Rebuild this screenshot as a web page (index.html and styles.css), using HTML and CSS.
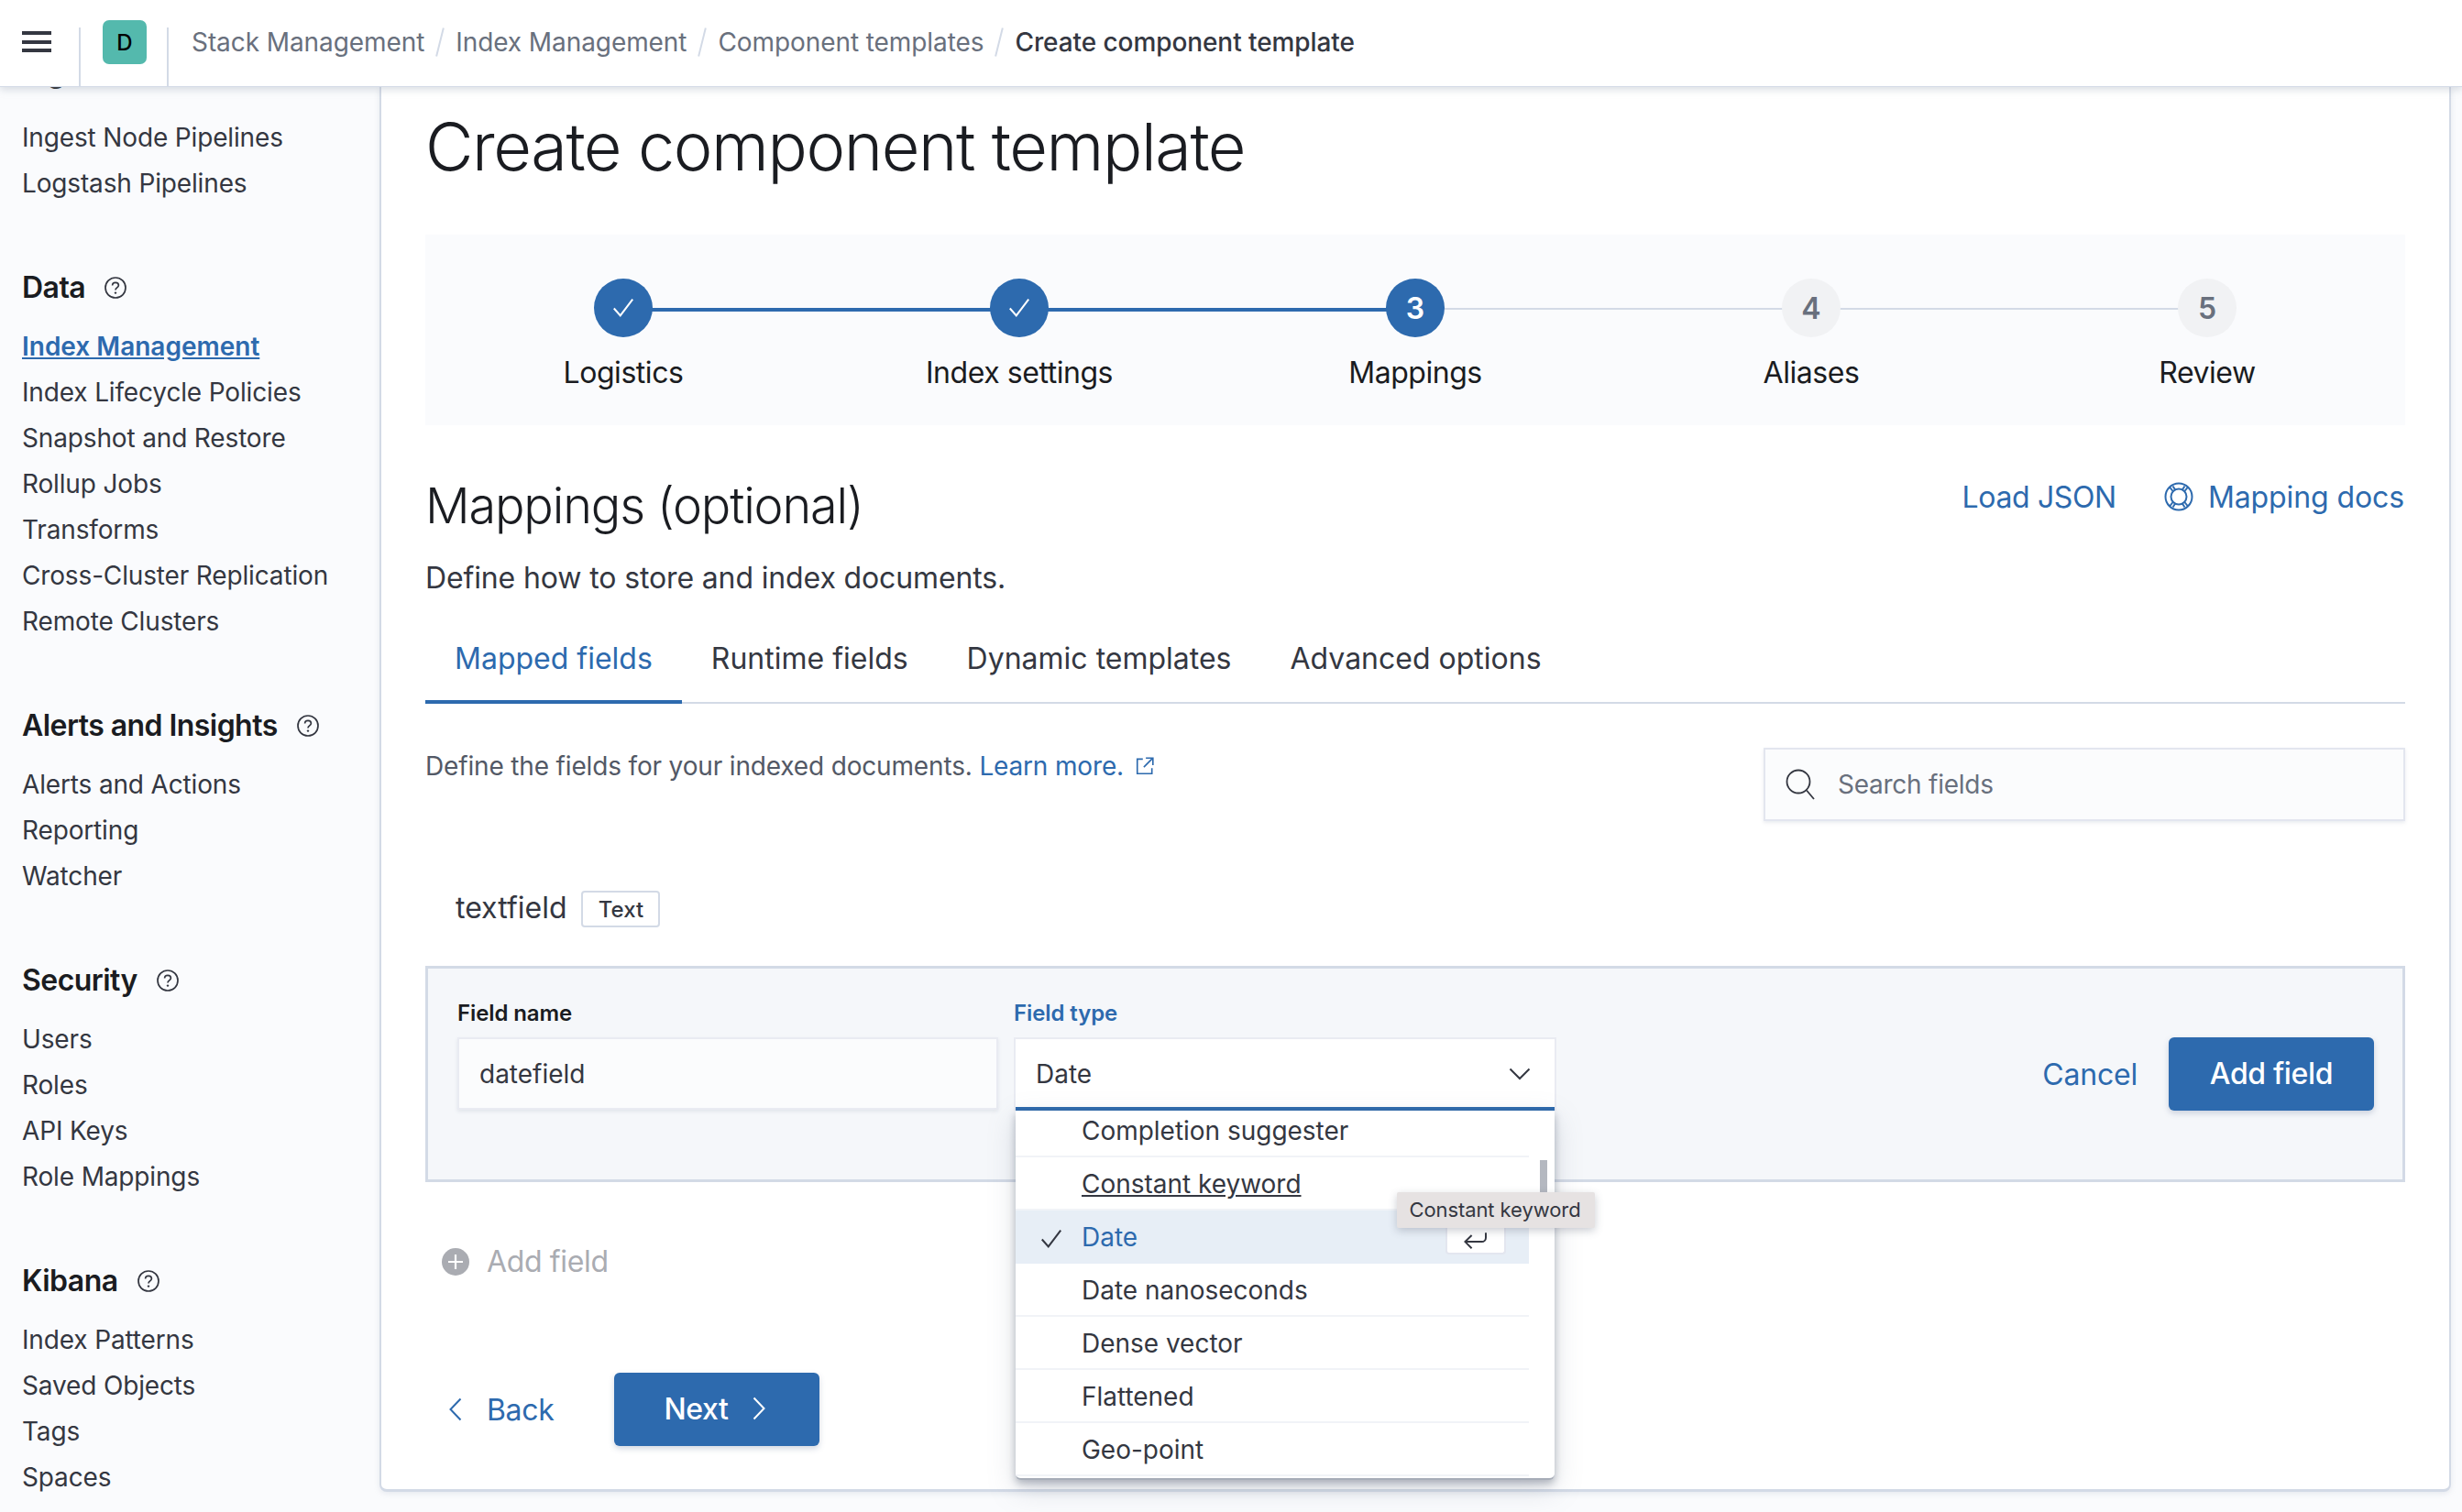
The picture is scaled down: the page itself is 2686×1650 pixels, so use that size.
FILE: index.html
```html
<!DOCTYPE html>
<html lang="en">
<head>
<meta charset="utf-8">
<title>Create component template</title>
<link rel="stylesheet" href="styles.css">
</head>
<body>
<svg class="defs" aria-hidden="true"><defs>
<symbol id="help" viewBox="0 0 24 24"><circle cx="12" cy="12" r="11" fill="none" stroke="currentColor" stroke-width="1.7"/><path d="M8.6 9.6c0-2 1.5-3.3 3.4-3.3s3.4 1.2 3.4 3c0 2.6-3.4 2.6-3.4 5.2" fill="none" stroke="currentColor" stroke-width="1.7"/><circle cx="12" cy="17.6" r="1.2" fill="currentColor"/></symbol>
<symbol id="check" viewBox="0 0 28 28"><path d="M3 14.5 10.5 23 25 4" fill="none" stroke="currentColor" stroke-width="2.2"/></symbol>
</defs></svg>
<header class="topbar">
  <div class="menu-cell"><span class="burger"><i></i><i></i><i></i></span></div>
  <div class="space-cell"><span class="avatar">D</span></div>
  <nav class="crumbs">
    <span>Stack Management</span><b class="slash"></b>
    <span>Index Management</span><b class="slash"></b>
    <span>Component templates</span><b class="slash"></b>
    <span class="crumb-current">Create component template</span>
  </nav>
</header>
<div class="shell">
  <aside class="sidebar">
    <section class="group group-first">
      <h3 class="group-title">Ingest<svg class="help"><use href="#help"/></svg></h3>
      <ul><li>Ingest Node Pipelines</li><li>Logstash Pipelines</li></ul>
    </section>
    <section class="group">
      <h3 class="group-title">Data<svg class="help"><use href="#help"/></svg></h3>
      <ul><li class="active">Index Management</li><li>Index Lifecycle Policies</li><li>Snapshot and Restore</li><li>Rollup Jobs</li><li>Transforms</li><li>Cross-Cluster Replication</li><li>Remote Clusters</li></ul>
    </section>
    <section class="group">
      <h3 class="group-title">Alerts and Insights<svg class="help"><use href="#help"/></svg></h3>
      <ul><li>Alerts and Actions</li><li>Reporting</li><li>Watcher</li></ul>
    </section>
    <section class="group">
      <h3 class="group-title">Security<svg class="help"><use href="#help"/></svg></h3>
      <ul><li>Users</li><li>Roles</li><li>API Keys</li><li>Role Mappings</li></ul>
    </section>
    <section class="group">
      <h3 class="group-title">Kibana<svg class="help"><use href="#help"/></svg></h3>
      <ul><li>Index Patterns</li><li>Saved Objects</li><li>Tags</li><li>Spaces</li></ul>
    </section>
  </aside>
  <main class="panel">
    <h1 class="page-title">Create component template</h1>
    <div class="stepper">
      <div class="step done"><span class="dot"><svg class="dot-check"><use href="#check"/></svg></span><span class="step-label">Logistics</span></div>
      <div class="step done"><span class="dot"><svg class="dot-check"><use href="#check"/></svg></span><span class="step-label">Index settings</span></div>
      <div class="step current"><span class="dot">3</span><span class="step-label">Mappings</span></div>
      <div class="step todo"><span class="dot">4</span><span class="step-label">Aliases</span></div>
      <div class="step todo"><span class="dot">5</span><span class="step-label">Review</span></div>
    </div>
    <div class="section-head">
      <h2 class="section-title">Mappings (optional)</h2>
      <div class="section-links">
        <a class="link link-json">Load JSON</a>
        <a class="link link-icon"><svg class="buoy" viewBox="0 0 32 32" fill="none" stroke="currentColor" stroke-width="2"><circle cx="16" cy="16" r="14.5"/><circle cx="16" cy="16" r="8.5"/><path d="M6 5.5 10 10.5M26 5.5 22 10.5M6 26.5 10 21.5M26 26.5 22 21.5M9.5 4.5 12.5 9M22.5 4.5 19.5 9M9.5 27.5 12.5 23M22.5 27.5 19.5 23"/></svg>Mapping docs</a>
      </div>
    </div>
    <p class="section-desc">Define how to store and index documents.</p>
    <div class="tabs">
      <span class="tab tab-active">Mapped fields</span>
      <span class="tab">Runtime fields</span>
      <span class="tab">Dynamic templates</span>
      <span class="tab">Advanced options</span>
    </div>
    <div class="intro-row">
      <p class="intro">Define the fields for your indexed documents. <a class="link-inline">Learn more.</a><svg class="popout" viewBox="0 0 20 20" fill="none" stroke="currentColor" stroke-width="1.5"><path d="M8 3H2.5v14.500H17V12M11 2h7v7M18 2 9 11"/></svg></p>
      <div class="search"><svg class="search-icon" viewBox="0 0 34 34" fill="none" stroke="#343741" stroke-width="1.8"><circle cx="14" cy="14" r="12.500"/><path d="M23 23.500 31 33"/></svg><span>Search fields</span></div>
    </div>
    <div class="field-row"><span class="field-name">textfield</span><span class="badge">Text</span></div>
    <div class="form-panel">
      <div class="field field-name-col">
        <label class="field-label">Field name</label>
        <div class="input">datefield</div>
      </div>
      <div class="field field-type-col">
        <label class="field-label field-label-active">Field type</label>
        <div class="select">Date<svg class="chev-down" viewBox="0 0 24 14" fill="none" stroke="#343741" stroke-width="2"><path d="M1.500 1.500 12 12 22.500 1.500"/></svg>
          <div class="dropdown">
            <div class="opt"><span>Completion suggester</span></div>
            <div class="opt"><span class="opt-hover">Constant keyword</span></div>
            <div class="opt opt-selected"><svg class="opt-check"><use href="#check"/></svg><span>Date</span><span class="enter-key"><svg viewBox="0 0 24 20" fill="none" stroke="#343741" stroke-width="1.800"><path d="M22 2v5a4 4 0 0 1-4 4H2M8 4.500 1.500 11 8 17.500"/></svg></span></div>
            <div class="opt"><span>Date nanoseconds</span></div>
            <div class="opt"><span>Dense vector</span></div>
            <div class="opt"><span>Flattened</span></div>
            <div class="opt"><span>Geo-point</span></div>
            <i class="scroll-thumb"></i>
          </div>
          <div class="tooltip">Constant keyword</div>
        </div>
      </div>
      <div class="form-actions">
        <a class="link">Cancel</a>
        <button class="btn" type="button">Add field</button>
      </div>
    </div>
    <div class="add-field"><svg class="plus" viewBox="0 0 30 30"><circle cx="15" cy="15" r="15" fill="#aaacb2"/><path d="M15 7v16M7 15h16" stroke="#fff" stroke-width="2.200"/></svg>Add field</div>
    <div class="footer">
      <a class="back"><svg class="chev chev-back" viewBox="0 0 14 26" fill="none" stroke="currentColor" stroke-width="2"><path d="M12.500 1.500 1.500 13l11 11.500"/></svg>Back</a>
      <button class="btn btn-next" type="button">Next<svg class="chev" viewBox="0 0 14 26" fill="none" stroke="currentColor" stroke-width="2"><path d="M1.500 1.500 12.500 13l-11 11.500"/></svg></button>
    </div>
  </main>
</div>
</body>
</html>
```
FILE: styles.css
```css
* { box-sizing: border-box; }
html, body { margin: 0; padding: 0; }
body {
  width: 2686px; height: 1650px; overflow: hidden;
  background: #fafbfd; color: #343741;
  font-family: Inter, "Liberation Sans", sans-serif; font-size: 28px;
}
.defs { width: 0; height: 0; position: absolute; }
h1, h2, h3, p, ul { margin: 0; padding: 0; }
ul { list-style: none; }

.topbar {
  position: relative; z-index: 5; height: 95px; display: flex; background: #fff;
  border-bottom: 1px solid #d3dae6;
  box-shadow: 0 3px 8px rgba(152, 162, 179, .35);
}
.menu-cell { width: 88px; padding: 34px 0 0 24px; position: relative; }
.menu-cell::after, .space-cell::after {
  content: ""; position: absolute; right: 0; top: 30px; bottom: 0; width: 2px; background: #d3dae6;
}
.burger { display: flex; flex-direction: column; gap: 5.500px; width: 32px; }
.burger i { display: block; height: 4px; background: #343741; }
.space-cell { width: 96px; padding: 22px 0 0 24px; position: relative; }
.avatar {
  display: flex; width: 48px; height: 48px; align-items: center; justify-content: center;
  border-radius: 7px; background: #54b9ad; color: #000; font-size: 24px; font-weight: 500;
}
.crumbs { display: flex; align-items: center; height: 94px; padding: 0 0 2px 25px; color: #69707d; font-size: 28px; letter-spacing: -.08px; }
.slash { display: block; width: 2px; height: 32px; margin: 0 16px; background: #d3dae6; transform: rotate(14deg); }
.crumb-current { color: #343741; font-weight: 500; }

.shell { display: flex; height: 1555px; }
.sidebar { width: 414px; padding-left: 24px; overflow: hidden; flex: none; font-size: 28px; }
.group { margin-bottom: 72px; }
.group-first { margin-top: -32px; }
.group-first .group-title { margin-bottom: 31px; }
.group-title { display: flex; align-items: center; gap: 21px; height: 32px; font-size: 32px; font-weight: 600; color: #1a1c21; margin-bottom: 24px; line-height: 32px; letter-spacing: -.55px; white-space: nowrap; }
.help { width: 24px; height: 24px; color: #343741; flex: none; }
.sidebar li { height: 50px; line-height: 48px; color: #343741; white-space: nowrap; letter-spacing: -.15px; }
.sidebar .active { color: #2d6aae; font-weight: 600; text-decoration: underline; letter-spacing: 0; }

.panel {
  width: 2260px; height: 1533px; padding: 0 48px; background: #fff; flex: none;
  border: solid #d3dae6; border-width: 0 2px 3px 2px; border-radius: 0 0 8px 8px;
  box-shadow: 0 2px 6px rgba(152, 162, 179, .2);
}
.page-title { margin: 23px 0 0; height: 84px; font-size: 72px; line-height: 84px; font-weight: 300; letter-spacing: -1.42px; color: #1a1c21; }

.stepper { display: grid; grid-template-columns: repeat(5, 1fr); margin-top: 54px; height: 208px; background: #fafbfd; }
.step { position: relative; display: flex; flex-direction: column; align-items: center; padding-top: 48px; }
.step + .step::before {
  content: ""; position: absolute; top: 80px; left: -50%; right: 50%; height: 2px; background: #d3dae6;
}
.step.done + .step::before { height: 4px; background: #2d6aae; }
.dot {
  position: relative; z-index: 1; display: flex; width: 64px; height: 64px; align-items: center; justify-content: center;
  border-radius: 50%; background: #2d6aae; color: #fff; font-size: 32px; font-weight: 600;
}
.todo .dot { background: #f1f2f4; color: #69707d; }
.dot-check { width: 26px; height: 26px; }
.step-label { margin-top: 21px; height: 35px; line-height: 36px; font-size: 32px; letter-spacing: -.45px; color: #1a1c21; }

.section-head { display: flex; justify-content: space-between; margin-top: 48px; height: 80px; }
.section-title { font-size: 54px; line-height: 80px; font-weight: 300; letter-spacing: -1.15px; color: #1a1c21; }
.section-links { display: flex; gap: 52px; height: 60px; align-items: center; padding-right: 1px; }
.link { color: #2d6aae; font-size: 32px; letter-spacing: -.2px; }
.link-json { letter-spacing: -.35px; }
.link-icon { display: flex; align-items: center; gap: 16px; letter-spacing: -.1px; }
.buoy { width: 32px; height: 32px; }
.section-desc { margin-top: 18px; height: 40px; line-height: 41px; font-size: 32px; letter-spacing: -.13px; color: #343741; }

.tabs { display: flex; margin-top: 20px; height: 98px; border-bottom: 2px solid #d3dae6; }
.tab { height: 98px; padding: 0 32px; line-height: 97px; font-size: 32px; color: #343741; }
.tab-active { color: #2d6aae; border-bottom: 4px solid #2d6aae; }

.intro-row { display: flex; justify-content: space-between; margin-top: 48px; }
.intro { height: 40px; line-height: 40px; font-size: 28px; letter-spacing: -.16px; color: #535966; display: flex; align-items: center; white-space: pre; }
.link-inline { color: #2d6aae; }
.popout { width: 22px; height: 22px; margin-left: 12px; color: #2d6aae; }
.search {
  display: flex; align-items: center; gap: 23px; width: 700px; height: 80px; padding-left: 22px;
  background: #fbfcfd; border: 2px solid #e3e6ef; color: #69707d; font-size: 28px; letter-spacing: -.25px;
  box-shadow: 0 2px 4px rgba(152, 162, 179, .2);
}
.search-icon { width: 34px; height: 34px; }

.field-row { display: flex; align-items: center; gap: 16px; margin-top: 76px; padding-left: 33px; height: 40px; }
.field-name { font-size: 32px; color: #343741; padding-bottom: 4px; }
.badge {
  display: flex; align-items: center; justify-content: center; width: 86px; height: 40px;
  border: 2px solid #d3dae6; border-radius: 4px; font-size: 24px; font-weight: 500; color: #343741;
}

.form-panel {
  display: flex; margin-top: 42px; height: 236px; padding: 28px 31px 0 32px;
  background: #f5f7fa; border: 3px solid #d3dae6;
}
.field-label { display: block; height: 40px; line-height: 41px; margin-bottom: 7px; font-size: 24px; font-weight: 600; letter-spacing: -.1px; color: #1a1c21; }
.field-label-active { color: #2d6aae; }
.field-name-col { width: 590px; margin-right: 17px; }
.field-type-col { width: 592px; }
.input {
  height: 79px; line-height: 76px; padding-left: 22px; font-size: 28px; color: #343741;
  background: #fbfcfd; border: 2px solid #e9ebf2; box-shadow: 0 2px 4px rgba(152, 162, 179, .2);
}
.select {
  position: relative; display: flex; align-items: center; justify-content: space-between;
  height: 80px; padding: 0 26px 2px 22px; font-size: 28px; color: #343741;
  background: #fff; border: solid #e9ebf2; border-width: 2px 2px 0; box-shadow: inset 0 -4px 0 #2d6aae;
}
.chev-down { width: 24px; height: 14px; }
.dropdown {
  position: absolute; z-index: 3; left: 0; right: 0; top: 78px; height: 403px;
  background: #fff; border-radius: 0 0 6px 6px; overflow: hidden;
  box-shadow: 0 4px 8px rgba(80, 90, 110, .4), 0 10px 30px rgba(120, 130, 150, .25);
  border-bottom: 2px solid #a7adb8;
}
.opt {
  position: relative; display: flex; align-items: center; width: 560px; height: 58px; padding: 2px 0 0 72px;
  border-bottom: 2px solid #f1f3f7; font-size: 28px; color: #343741; letter-spacing: -.02px;
}
.opt:first-child { height: 51px; padding: 0 0 6px 72px; }
.opt-hover { text-decoration: underline; }
.opt-selected { background: #e7eef6; color: #2d6aae; border-bottom-color: #e7eef6; }
.opt-check { position: absolute; left: 26px; top: 18px; width: 26px; height: 26px; color: #343741; }
.enter-key {
  position: absolute; right: 25px; top: 19px; width: 66px; height: 29px; display: flex; justify-content: center; align-items: center;
  background: #fff; border: 2px solid #e3e6ef; border-top: 0; border-radius: 0 0 4px 4px;
}
.enter-key svg { width: 28px; height: 22px; }
.scroll-thumb { position: absolute; left: 572px; top: 54px; width: 8px; height: 44px; background: #b4b8c0; }
.tooltip {
  position: absolute; z-index: 4; left: 416px; top: 167px; width: 216px; height: 39px; line-height: 38px; text-align: center;
  background: #e6e2e2; color: #343741; font-size: 22px; letter-spacing: -.08px; padding-right: 2px; border-radius: 2px;
  box-shadow: 0 3px 10px rgba(80, 90, 110, .3);
}
.form-actions { display: flex; align-items: center; gap: 34px; margin-left: auto; height: 80px; margin-top: 47px; }
.btn {
  display: flex; align-items: center; justify-content: center; width: 224px; height: 80px; padding: 0 0 2px;
  border: 0; border-radius: 6px; background: #2d6aae; color: #fff; font: 500 32px Inter, "Liberation Sans", sans-serif;
  letter-spacing: -.35px;
  box-shadow: 0 3px 6px rgba(80, 100, 140, .25);
}
.add-field { display: flex; align-items: center; gap: 19px; margin-top: 57px; height: 60px; padding: 0 0 1px 18px; color: #aaacb2; font-size: 32px; letter-spacing: -.35px; }
.plus { width: 30px; height: 30px; }
.footer { display: flex; align-items: center; margin-top: 91px; }
.back { display: flex; align-items: center; gap: 27px; width: 206px; padding-left: 26px; color: #2d6aae; font-size: 32px; letter-spacing: -.35px; }
.chev { width: 14px; height: 26px; }
.btn-next { gap: 26px; padding: 0 5px 2px 0; }
```
